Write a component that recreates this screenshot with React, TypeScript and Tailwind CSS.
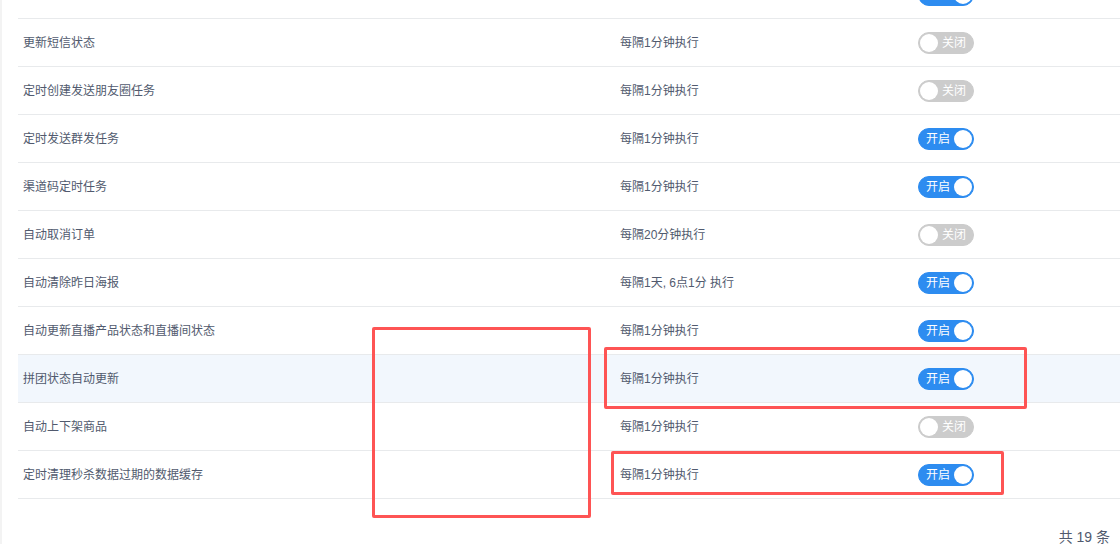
import React from "react";

type Task = { name: string; cycle: string; on: boolean };

const TASKS: Task[] = [
  { name: "", cycle: "", on: true },
  { name: "更新短信状态", cycle: "每隔1分钟执行", on: false },
  { name: "定时创建发送朋友圈任务", cycle: "每隔1分钟执行", on: false },
  { name: "定时发送群发任务", cycle: "每隔1分钟执行", on: true },
  { name: "渠道码定时任务", cycle: "每隔1分钟执行", on: true },
  { name: "自动取消订单", cycle: "每隔20分钟执行", on: false },
  { name: "自动清除昨日海报", cycle: "每隔1天, 6点1分 执行", on: true },
  { name: "自动更新直播产品状态和直播间状态", cycle: "每隔1分钟执行", on: true },
  { name: "拼团状态自动更新", cycle: "每隔1分钟执行", on: true },
  { name: "自动上下架商品", cycle: "每隔1分钟执行", on: false },
  { name: "定时清理秒杀数据过期的数据缓存", cycle: "每隔1分钟执行", on: true },
];

const Switch = ({ on }: { on: boolean }) => (
  <span
    className={`relative inline-block h-[22px] w-[56px] rounded-full border ${
      on ? "border-[#2d8cf0] bg-[#2d8cf0]" : "border-[#cccccc] bg-[#cccccc]"
    }`}
  >
    <span
      className={`absolute top-[1px] h-[18px] w-[18px] rounded-full bg-white ${
        on ? "left-[35px]" : "left-[1px]"
      }`}
    />
    <span
      className={`absolute top-0 text-[12px] leading-[20px] text-white ${on ? "left-[7px]" : "left-[23px]"}`}
    >
      {on ? "开启" : "关闭"}
    </span>
  </span>
);

export default function App() {
  return (
    <div
      className="relative flex h-[544px] w-[1120px] overflow-hidden bg-white text-[12px] text-[#515a6e]"
      style={{ fontFamily: '"Liberation Sans", "Noto Sans CJK SC", sans-serif' }}
    >
      <div className="w-[2px] shrink-0 bg-[#f3f3f3]" />
      <div className="flex min-w-0 flex-1 flex-col pl-[16px]">
        <div className="-mt-[29px]">
          {TASKS.map((task, i) => (
            <div
              key={i}
              className={`grid h-[48px] grid-cols-[590px_298px_1fr] items-center border-b border-[#e8eaec] ${
                i === 8 ? "bg-[#f2f7fd]" : ""
              }`}
            >
              <div className="pl-[5px]">{task.name}</div>
              <div className="pl-[12px]">{task.cycle}</div>
              <div className="flex pl-[12px]">
                <Switch on={task.on} />
              </div>
            </div>
          ))}
        </div>
        <div className="mt-[28px] flex justify-end pr-[10px] text-[14px] text-[#515a6e]">共 19 条</div>
      </div>

      {/* annotation boxes */}
      <div className="pointer-events-none absolute left-[372px] top-[327px] h-[191px] w-[219px] rounded-[2px] border-[3px] border-[#fe5454]" />
      <div className="pointer-events-none absolute left-[604px] top-[347px] h-[62px] w-[423px] rounded-[2px] border-[3px] border-[#fe5454]" />
      <div className="pointer-events-none absolute left-[611px] top-[451px] h-[44px] w-[393px] rounded-[2px] border-[3px] border-[#fe5454]" />
    </div>
  );
}
